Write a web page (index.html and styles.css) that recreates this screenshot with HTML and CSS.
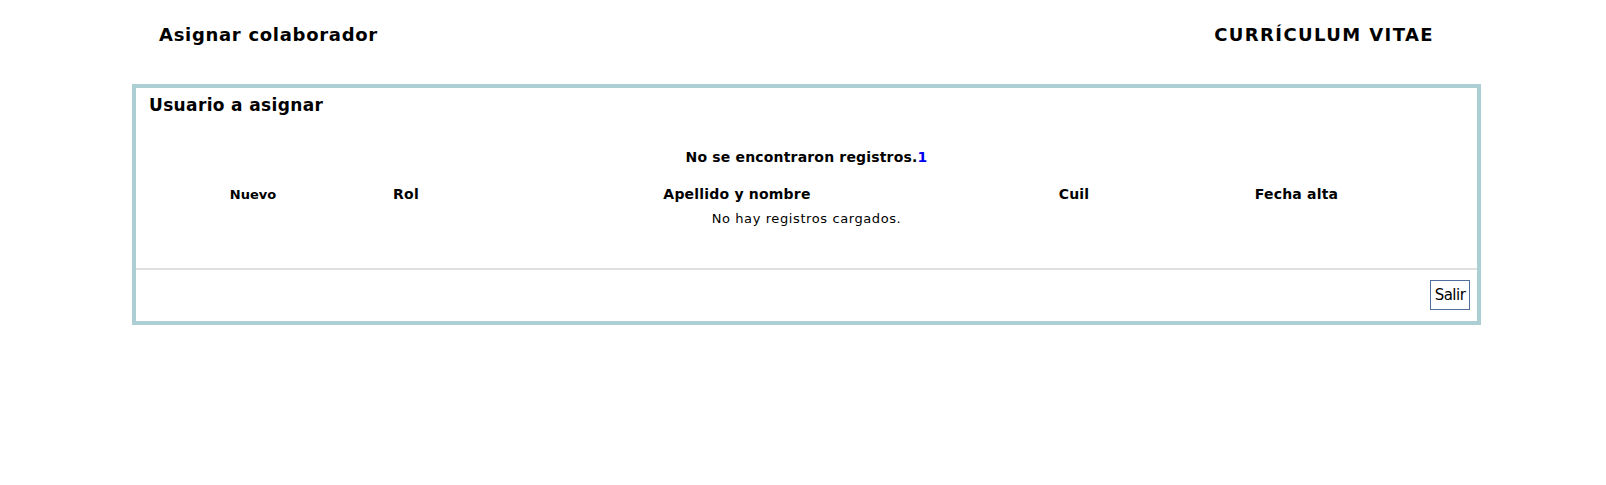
FILE: index.html
```html
<!DOCTYPE html>
<html lang="es">
<head>
<meta charset="utf-8">
<title>Asignar colaborador</title>
<link rel="stylesheet" href="styles.css">
</head>
<body>
<header class="top">
  <h1 class="title title-left">Asignar colaborador</h1>
  <h1 class="title title-right">CURRÍCULUM VITAE</h1>
</header>
<section class="panel">
  <h2 class="panel-title">Usuario a asignar</h2>
  <p class="msg">No se encontraron registros.<span class="num">1</span></p>
  <div class="grid">
    <div class="th th-small">Nuevo</div>
    <div class="th">Rol</div>
    <div class="th">Apellido y nombre</div>
    <div class="th">Cuil</div>
    <div class="th">Fecha alta</div>
    <div class="empty">No hay registros cargados.</div>
  </div>
  <div class="footer">
    <button class="btn" type="button">Salir</button>
  </div>
</section>
</body>
</html>
```
FILE: styles.css
```css
html, body {
  margin: 0;
  padding: 0;
  background: #fff;
}
body {
  font-family: "DejaVu Sans", Verdana, sans-serif;
  color: #000;
}
.top {
  display: flex;
  justify-content: space-between;
  padding: 23px 172px 0 159px;
  height: 84px;
  box-sizing: border-box;
}
.title {
  margin: 0;
  font-size: 18px;
  font-weight: bold;
  line-height: 24px;
}
.title-left {
  letter-spacing: 0.7px;
}
.title-right {
  letter-spacing: 1.4px;
}
.panel {
  margin: 0 125px 0 132px;
  border: 4px solid #accfd4;
  height: 241px;
  box-sizing: border-box;
  display: flex;
  flex-direction: column;
}
.panel-title {
  margin: 0;
  padding: 7px 0 0 13px;
  font-size: 17px;
  font-weight: bold;
  line-height: 20px;
  letter-spacing: 0.35px;
}
.msg {
  margin: 34px 0 0;
  text-align: center;
  font-size: 14px;
  font-weight: bold;
  line-height: 16px;
  letter-spacing: 0.17px;
}
.num {
  color: #0000ee;
}
.grid {
  display: grid;
  grid-template-columns: 214px 92px 570px 104px 1fr;
  align-items: baseline;
  margin: 21px 10px 0;
  font-size: 14px;
}
.th {
  text-align: center;
  font-weight: bold;
  line-height: 16px;
  letter-spacing: 0.2px;
}
.th-small {
  font-size: 13px;
  letter-spacing: 0;
}
.empty {
  grid-column: 1 / -1;
  text-align: center;
  font-size: 13px;
  line-height: 16px;
  padding-top: 8px;
  letter-spacing: 0.6px;
}
.footer {
  margin-top: auto;
  border-top: 2px solid #e0e0e0;
  display: flex;
  justify-content: flex-end;
  padding: 10px 7px 11px;
}
.btn {
  font-family: "DejaVu Sans", sans-serif;
  font-size: 15px;
  background: #fff;
  border: 1px solid #4d6f99;
  padding: 4px 2px;
  height: 30px;
  width: 40px;
  box-sizing: border-box;
  color: #000;
  letter-spacing: -0.5px;
}
```
